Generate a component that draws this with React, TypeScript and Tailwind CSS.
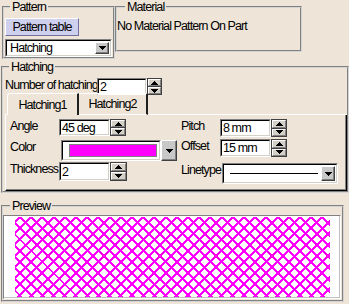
import React from "react";

function Tri({ up = false }: { up?: boolean }) {
  return (
    <svg width="7" height="4" viewBox="0 0 7 4" shapeRendering="crispEdges">
      <path d={up ? "M3.5 0L7 4H0Z" : "M0 0H7L3.5 4Z"} fill="#000" />
    </svg>
  );
}

function Spin({ w = "w-[16px]" }: { w?: string }) {
  return (
    <div className={`flex h-full ${w} flex-col gap-px border border-[#404040] bg-[#404040]`}>
      <div className="flex flex-1 items-center justify-center border border-white border-b-[#808080] border-r-[#808080] bg-[#d4d0c8]">
        <Tri up />
      </div>
      <div className="flex flex-1 items-center justify-center border border-white border-b-[#808080] border-r-[#808080] bg-[#d4d0c8]">
        <Tri />
      </div>
    </div>
  );
}

function DropBtn({ w = "w-[15px]" }: { w?: string }) {
  return (
    <div className={`flex h-full ${w} items-center justify-center border border-white border-b-[#404040] border-r-[#404040] bg-[#c8c8c8] shadow-[inset_-1px_-1px_0_#808080]`}>
      <Tri />
    </div>
  );
}

function Sunken({ w, children }: { w: string; children?: React.ReactNode }) {
  return (
    <div className={`${w} h-full border border-[#808080] border-b-white border-r-white`}>
      <div className="flex h-full items-center border border-black border-b-[#d4d0c8] border-r-[#d4d0c8] bg-white pl-px">
        {children}
      </div>
    </div>
  );
}

function Field({ value, w, spin }: { value: string; w: string; spin?: string }) {
  return (
    <div className="flex h-full">
      <Sunken w={w}>{value}</Sunken>
      <Spin w={spin} />
    </div>
  );
}

function Hatch() {
  const lines = [];
  for (let k = -10; k < 40; k++) {
    const c = 5 + 11.2 * k;
    lines.push(<line key={"a" + k} x1={c} y1={0} x2={c + 90} y2={90} />);
    lines.push(<line key={"b" + k} x1={c} y1={0} x2={c - 90} y2={90} />);
  }
  return (
    <svg width="315" height="80" shapeRendering="crispEdges" stroke="#ff00ff" strokeWidth="2">
      {lines}
    </svg>
  );
}

const group = "m-0 min-w-0 p-0 border-2 border-[#d4d4d4] [border-style:groove]";

export default function App() {
  return (
    <div className="h-[304px] w-[349px] overflow-hidden whitespace-nowrap bg-[#eee4d8] font-['Liberation_Sans',Arial,sans-serif] text-[12.5px] leading-[14px] tracking-[-0.9px] text-black">
      <div className="flex">
        <fieldset className={`${group} ml-[2px] h-[59px] w-[113px]`}>
          <legend className="ml-[6px] px-[2px]">Pattern</legend>
          <div className="ml-px mt-[4px] flex h-[18px] w-[74px] items-center justify-center border border-white border-b-[#7070a0] border-r-[#7070a0] bg-[#cfcfee]">
            Pattern table
          </div>
          <div className="ml-px mt-[3px] flex h-[18px] w-[107px]">
            <Sunken w="flex-1">
              <span className="pl-[2px]">Hatching</span>
              <span className="ml-auto h-full py-px pr-px">
                <DropBtn w="w-[14px]" />
              </span>
            </Sunken>
          </div>
        </fieldset>
        <fieldset className={`${group} h-[52px] w-[187px]`}>
          <legend className="ml-[8px] px-[2px]">Material</legend>
          <div className="mt-[5px]">No Material Pattern On Part</div>
        </fieldset>
      </div>

      <fieldset className={`${group} ml-px mt-px h-[133px] w-[348px]`}>
        <legend className="ml-[6px] px-[2px]">Hatching</legend>
        <div className="ml-[2px] mt-[4px] flex h-[17px] items-start">
          <span className="w-[92px]">Number of hatching</span>
          <Field value="2" w="w-[50px]" spin="w-[15px]" />
        </div>
        <div className="ml-[2px] -mt-[2px] flex h-[22px] w-[342px]">
          <div className="w-[2px] border-b border-white" />
          <div className="flex w-[72px] items-center justify-center rounded-tl-[3px] border-l border-t border-white border-r-2 border-r-[#202020]">
            Hatching1
          </div>
          <div className="flex w-[69px] items-center justify-center rounded-tr-[2px] border-b border-t border-white border-r-2 border-r-[#202020]">
            Hatching2
          </div>
          <div className="flex-1 border-b border-white" />
        </div>
        <div className="ml-[2px] flex h-[76px] w-[342px] border-b border-l border-r border-white border-b-black border-r-black shadow-[inset_-1px_-1px_0_#808080]">
          <div className="w-[173px] pl-[4px]">
            <div className="mt-[4px] flex h-[17px] items-start">
              <span className="w-[49px]">Angle</span>
              <Field value="45 deg" w="w-[51px]" />
            </div>
            <div className="mt-[4px] flex h-[21px] items-start">
              <span className="w-[51px]">Color</span>
              <Sunken w="w-[100px]">
                <div className="ml-[5px] h-[13px] w-[88px] border border-[#808080] bg-[#ff00ff]" />
              </Sunken>
              <DropBtn w="w-[16px]" />
            </div>
            <div className="mt-px flex h-[19px] items-start">
              <span className="w-[49px]">Thickness</span>
              <Field value="2" w="w-[51px]" spin="w-[17px]" />
            </div>
          </div>
          <div className="pl-[2px]">
            <div className="mt-[4px] flex h-[18px] items-start">
              <span className="w-[39px]">Pitch</span>
              <Field value="8 mm" w="w-[51px]" />
            </div>
            <div className="mt-[2px] flex h-[18px] items-start">
              <span className="w-[39px]">Offset</span>
              <Field value="15 mm" w="w-[51px]" />
            </div>
            <div className="mt-[6px] flex h-[21px] items-start">
              <span className="w-[41px]">Linetype</span>
              <Sunken w="w-[116px]">
                <div className="ml-[5px] h-px w-[88px] bg-black" />
                <span className="ml-auto h-full py-px pr-px">
                  <DropBtn w="w-[14px]" />
                </span>
              </Sunken>
            </div>
          </div>
        </div>
      </fieldset>

      <fieldset className={`${group} ml-px mt-[6px] h-[103px] w-[343px] pb-px`}>
        <legend className="ml-[7px] px-[2px]">Preview</legend>
        <div className="mt-[2px] h-[84px] w-[338px] border border-[#808080] border-b-white border-r-white bg-white shadow-[inset_-1px_-1px_0_#c0c0c0]">
          <div className="ml-[11px] mt-px">
            <Hatch />
          </div>
        </div>
      </fieldset>
    </div>
  );
}
